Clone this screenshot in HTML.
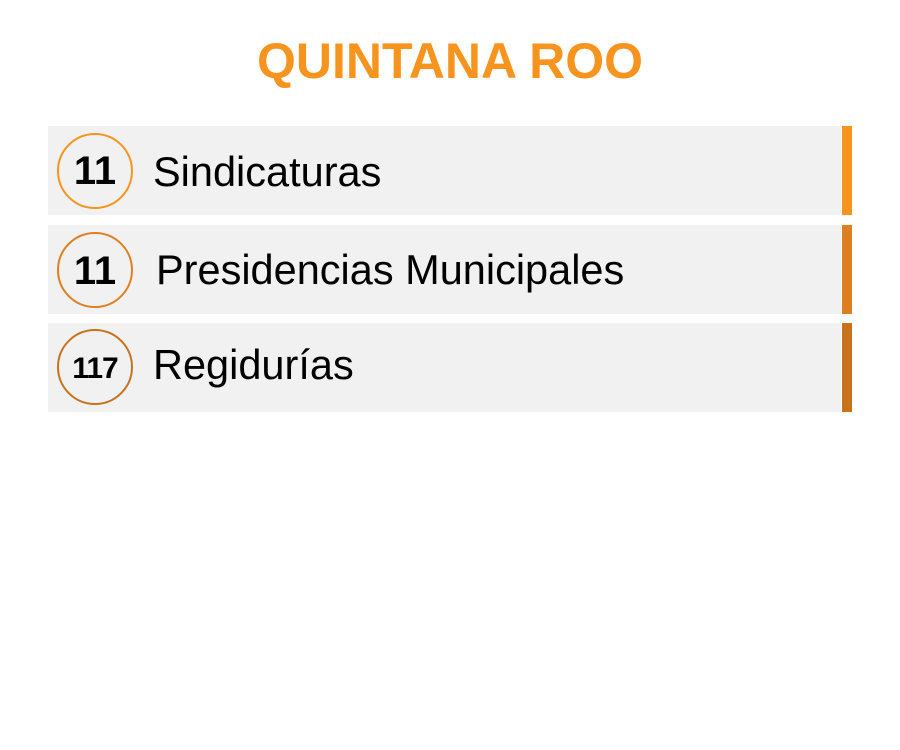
<html><head><style>
body{margin:0;width:900px;height:750px;background:#fff;font-family:"Liberation Sans",Arial,sans-serif;position:relative;overflow:hidden}
h1{position:absolute;top:32px;left:0;width:900px;text-align:center;margin:0;font-size:50px;font-weight:bold;color:#f7941d;line-height:58px}
.row{position:absolute;left:48px;width:793px;height:89px;background:#f1f1f1}
.bar{position:absolute;left:842px;width:10px;height:89px}
.c{position:absolute;left:9px;width:76px;height:76px;border:2.5px solid;border-radius:50%;box-sizing:border-box;text-align:center;font-weight:bold;color:#000}
.t{position:absolute;font-size:41.5px;color:#000;line-height:42px}
</style></head><body>
<h1>QUINTANA ROO</h1>
<div class="row" style="top:126px"><div class="c" style="top:7px;border-color:#f7941d;font-size:40px;line-height:72px">11</div><div class="t" style="left:105px;top:25px">Sindicaturas</div></div>
<div class="bar" style="top:126px;background:#f7941d"></div>
<div class="row" style="top:225px"><div class="c" style="top:7px;border-color:#df8020;font-size:40px;line-height:74px">11</div><div class="t" style="left:108px;top:24px">Presidencias Municipales</div></div>
<div class="bar" style="top:225px;background:#df8020"></div>
<div class="row" style="top:323px"><div class="c" style="top:6px;border-color:#c8731c;font-size:30px;line-height:76px;letter-spacing:-1px">117</div><div class="t" style="left:105px;top:21px">Regidurías</div></div>
<div class="bar" style="top:323px;background:#c8731c"></div>
</body></html>
